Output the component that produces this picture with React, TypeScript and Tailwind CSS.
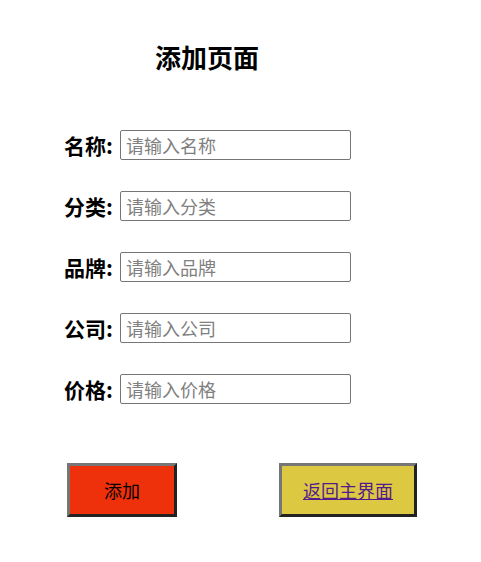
import React from "react";

const fields = [
  { label: "名称", ph: "请输入名称" },
  { label: "分类", ph: "请输入分类" },
  { label: "品牌", ph: "请输入品牌" },
  { label: "公司", ph: "请输入公司" },
  { label: "价格", ph: "请输入价格" },
];

export default function App() {
  return (
    <div
      className="w-[481px] h-[562px] bg-white text-black"
      style={{ fontFamily: '"Noto Sans CJK SC", "Noto Sans", sans-serif' }}
    >
      <div className="pt-[40px] pl-[64px]">
        <h2 className="w-[286px] text-center text-[26px] font-bold leading-[34px]">添加页面</h2>
        <div className="mt-[56px] flex flex-col gap-[31px]">
          {fields.map((f) => (
            <div key={f.label} className="flex items-center h-[30px]">
              <span className="text-[21px] font-bold leading-[30px] w-[56px]">{f.label}:</span>
              <input
                placeholder={f.ph}
                className="w-[231px] h-[30px] border border-[#767676] rounded-[2px] px-[5px] text-[18px] placeholder:text-[#808080] outline-none"
              />
            </div>
          ))}
        </div>
        <div className="mt-[59px] flex items-start">
          <button className="ml-[3px] w-[110px] h-[54px] bg-[#ef310b] border-[3px] border-t-[#767676] border-l-[#767676] border-r-[#222222] border-b-[#222222] text-[18px] text-black flex items-center justify-center">
            添加
          </button>
          <button className="ml-[102px] w-[138px] h-[54px] bg-[#dcc941] border-[3px] border-t-[#767676] border-l-[#767676] border-r-[#222222] border-b-[#222222] text-[18px] flex items-center justify-center">
            <a href="#" className="text-[#551a8b] underline">返回主界面</a>
          </button>
        </div>
      </div>
    </div>
  );
}
